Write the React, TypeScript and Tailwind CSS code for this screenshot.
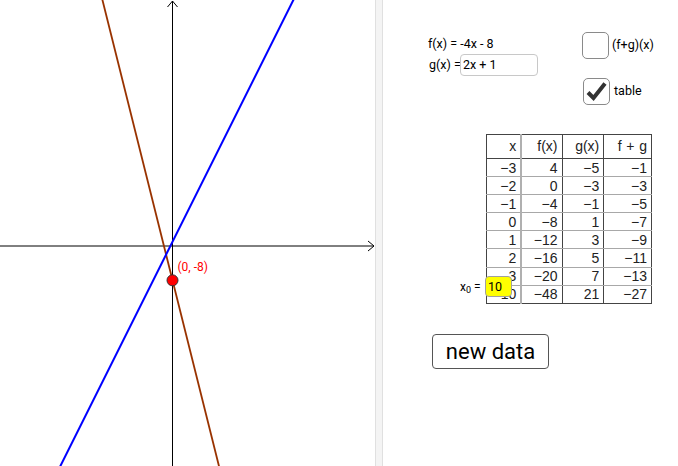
import React from "react";

const rows: [string, string, string, string][] = [
  ["−3", "4", "−5", "−1"],
  ["−2", "0", "−3", "−3"],
  ["−1", "−4", "−1", "−5"],
  ["0", "−8", "1", "−7"],
  ["1", "−12", "3", "−9"],
  ["2", "−16", "5", "−11"],
  ["3", "−20", "7", "−13"],
  ["10", "−48", "21", "−27"],
];

// graph scale: ~4.29 px per unit, origin at (172.5, 246)
const OX = 172.5;
const OY = 246;
const S = 4.29;
const px = (x: number) => OX + x * S;
const py = (y: number) => OY - y * S;

function Graph() {
  const f = (x: number) => -4 * x - 8;
  const g = (x: number) => 2 * x + 1;
  return (
    <svg width="375" height="466" viewBox="0 0 375 466" className="block">
      {/* axes */}
      <line x1="0" y1={OY} x2="374" y2={OY} stroke="#000" strokeWidth="1" />
      <polyline points={`368,${OY - 5} 374,${OY} 368,${OY + 5}`} fill="none" stroke="#000" strokeWidth="1" />
      <line x1={OX} y1="466" x2={OX} y2="1" stroke="#000" strokeWidth="1" />
      <polyline points={`${OX - 5},7 ${OX},1 ${OX + 5},7`} fill="none" stroke="#000" strokeWidth="1" />
      {/* f */}
      <line x1={px(-20)} y1={py(f(-20))} x2={px(20)} y2={py(f(20))} stroke="#993300" strokeWidth="1.8" />
      {/* g */}
      <line x1={px(-40)} y1={py(g(-40))} x2={px(40)} y2={py(g(40))} stroke="#0000ff" strokeWidth="2" />
      <circle cx={OX} cy={py(-8)} r="5.5" fill="#ff0000" stroke="#333" strokeWidth="1" />
      <text x="177.5" y="271" fill="#ff0000" fontSize="12" fontFamily="Roboto, 'Liberation Sans', sans-serif">
        (0, -8)
      </text>
    </svg>
  );
}

function CheckBox({ checked }: { checked?: boolean }) {
  return (
    <div className="w-[27px] h-[27px] rounded-[5px] border-[1.5px] border-[#8a8a8a] bg-white">
      {checked && (
        <svg width="24" height="24" viewBox="0 0 24 24" className="block">
          <path d="M4 13.5 L9.5 19 L21 4.5" fill="none" stroke="#333" strokeWidth="4" strokeLinejoin="miter" />
        </svg>
      )}
    </div>
  );
}

export default function App() {
  return (
    <div className="flex w-[678px] h-[466px] bg-white overflow-hidden text-black font-['Roboto','Liberation_Sans',sans-serif]">
      <div className="w-[375px] h-full shrink-0">
        <Graph />
      </div>
      <div className="w-[8px] h-full shrink-0 bg-[#f4f4f4] border-l border-r border-[#e0e0e0]" />

      <div className="flex-1 pt-[32px]">
        <div className="flex">
          <div className="ml-[45px] w-[126px] pt-[4px]">
            <div className="text-[12.5px] leading-[16px] whitespace-nowrap">f(x) = -4x - 8</div>
            <div className="flex items-center mt-[2px]">
              <span className="text-[12.5px] leading-[16px] w-[32px] shrink-0 pl-[1px] whitespace-nowrap">g(x) =</span>
              <div className="w-[78px] h-[22px] shrink-0 rounded-[4px] border border-[#c8c8c8] bg-white text-[12.5px] leading-[20px] pl-[2px]">
                2x + 1
              </div>
            </div>
          </div>
          <div className="ml-[28px] flex flex-col gap-[19px]">
            <div className="flex items-center gap-[3px]">
              <CheckBox />
              <span className="text-[12.5px]">(f+g)(x)</span>
            </div>
            <div className="flex items-center gap-[4px] ml-[1px]">
              <CheckBox checked />
              <span className="text-[12.5px]">table</span>
            </div>
          </div>
        </div>

        <div className="relative ml-[103px] mt-[29px] w-[166px]">
          <table className="table-fixed border-collapse text-[14px] font-['Liberation_Sans',sans-serif] text-[#222]">
            <colgroup>
              <col className="w-[35px]" />
              <col className="w-[41px]" />
              <col className="w-[42px]" />
              <col className="w-[48px]" />
            </colgroup>
            <thead>
              <tr className="h-[24px]">
                <th className="font-normal text-right pr-[4px] border border-[#444] border-r-2 border-r-[#b0b0b0]">x</th>
                <th className="font-normal text-right pr-[4px] border border-[#444]">f(x)</th>
                <th className="font-normal text-right pr-[4px] border border-[#444]">g(x)</th>
                <th className="font-normal text-right pr-[4px] border border-[#444] whitespace-nowrap">f{"\u2004"}+{"\u2004"}g</th>
              </tr>
            </thead>
            <tbody>
              {rows.map((r, i) => (
                <tr key={i} className="h-[18.1px]">
                  {r.map((c, j) => (
                    <td
                      key={j}
                      className={`text-right pr-[4px] leading-[16px] border-x border-x-[#444] border-y border-y-[#a8a8a8] ${j === 0 ? "border-r-2 border-r-[#b0b0b0]" : ""} ${i === rows.length - 1 ? "border-b-[#444]" : ""}`}
                    >
                      {c}
                    </td>
                  ))}
                </tr>
              ))}
            </tbody>
          </table>

          <div className="absolute left-[-26px] top-[142px] flex items-center">
            <span className="text-[12px] leading-[16px] w-[25px] whitespace-nowrap">
              x<sub className="text-[9px]">0</sub> =
            </span>
            <div className="w-[27px] h-[21px] rounded-[4px] border border-[#a0a0a0] bg-[#ffff00] text-[12.5px] leading-[19px] pl-[2px]">
              10
            </div>
          </div>
        </div>

        <button className="ml-[49px] mt-[30px] w-[117px] h-[35px] rounded-[4px] border border-[#555] bg-white text-[22px] leading-[33px] text-black">
          new data
        </button>
      </div>
    </div>
  );
}
